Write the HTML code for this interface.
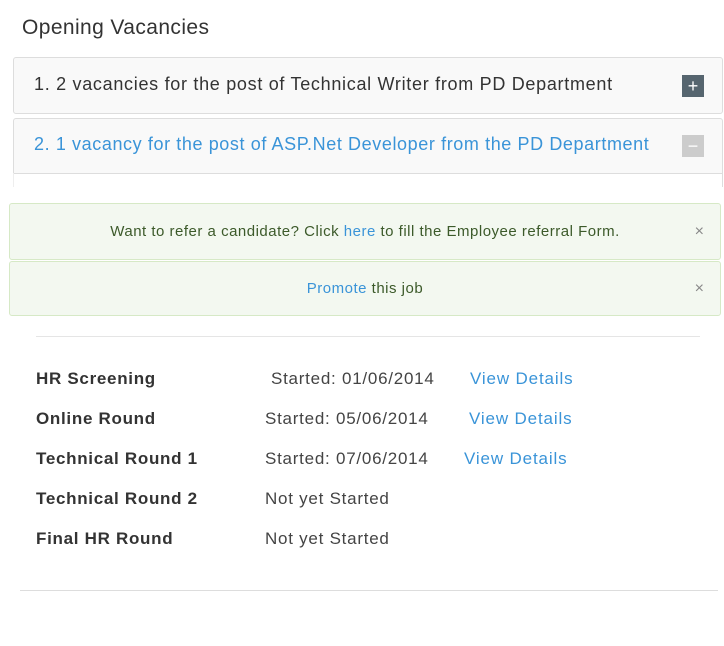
<!DOCTYPE html>
<html><head><meta charset="utf-8"><style>
*{margin:0;padding:0;box-sizing:border-box}
body{width:724px;height:646px;background:#fff;font-family:"Liberation Sans",sans-serif;color:#333;position:relative;overflow:hidden}
.a{position:absolute;white-space:nowrap}
.panel{position:absolute;left:13px;width:710px;height:57px;background:#f9f9f9;border:1px solid #ddd;border-radius:3px}
.box{position:absolute;left:682px;width:22px;height:22px;color:#fff;font-size:18px;line-height:22px;text-align:center}
.alert{position:absolute;left:9px;width:712px;background:#f3f8f0;border:1px solid #d6e9c6;border-radius:3px;color:#3c5a2a;font-size:15px;text-align:center;letter-spacing:0.5px}
.x{position:absolute;right:16px;color:#888;font-size:16px;letter-spacing:0}
.blue{color:#3a94d8}
.lbl{position:absolute;left:36px;font-weight:bold;font-size:17px;color:#333;letter-spacing:0.7px}
.val{position:absolute;font-size:17px;color:#444;letter-spacing:0.75px}
.lnk{position:absolute;font-size:17px;color:#3a94d8;letter-spacing:0.85px}
</style></head><body>
<div class="a" style="left:22px;top:16px;font-size:21px;color:#333;letter-spacing:0.4px">Opening Vacancies</div>
<div class="panel" style="top:57px"></div>
<div class="a" style="left:34px;top:74px;font-size:18px;color:#333;letter-spacing:0.7px">1. 2 vacancies for the post of Technical Writer from PD Department</div>
<div class="box" style="top:75px;background:#56656f">+</div>
<div class="panel" style="top:118px;height:56px;border-bottom-left-radius:0;border-bottom-right-radius:0"></div>
<div style="position:absolute;left:13px;top:173px;width:1px;height:14px;background:#eee"></div>
<div style="position:absolute;left:722px;top:173px;width:1px;height:14px;background:#ddd"></div>
<div class="a" style="left:34px;top:134px;font-size:18px;color:#3a94d8;letter-spacing:0.6px">2. 1 vacancy for the post of ASP.Net Developer from the PD Department</div>
<div class="box" style="top:135px;background:#ccc">−</div>
<div class="alert" style="top:203px;height:57px;line-height:55px">Want to refer a candidate? Click <span class="blue">here</span> to fill the Employee referral Form.<span class="x">×</span></div>
<div class="alert" style="top:261px;height:55px;line-height:53px"><span class="blue">Promote</span> this job<span class="x">×</span></div>
<div style="position:absolute;left:36px;top:336px;width:664px;height:1px;background:#e5e5e5"></div>
<div class="lbl" style="top:369px">HR Screening</div>
<div class="val" style="left:271px;top:369px">Started: 01/06/2014</div>
<div class="lnk" style="left:470px;top:369px">View Details</div>
<div class="lbl" style="top:409px">Online Round</div>
<div class="val" style="left:265px;top:409px">Started: 05/06/2014</div>
<div class="lnk" style="left:469px;top:409px">View Details</div>
<div class="lbl" style="top:449px">Technical Round 1</div>
<div class="val" style="left:265px;top:449px">Started: 07/06/2014</div>
<div class="lnk" style="left:464px;top:449px">View Details</div>
<div class="lbl" style="top:489px">Technical Round 2</div>
<div class="val" style="left:265px;top:489px">Not yet Started</div>
<div class="lbl" style="top:529px">Final HR Round</div>
<div class="val" style="left:265px;top:529px">Not yet Started</div>
<div style="position:absolute;left:20px;top:590px;width:698px;height:1px;background:#ddd"></div>
</body></html>
